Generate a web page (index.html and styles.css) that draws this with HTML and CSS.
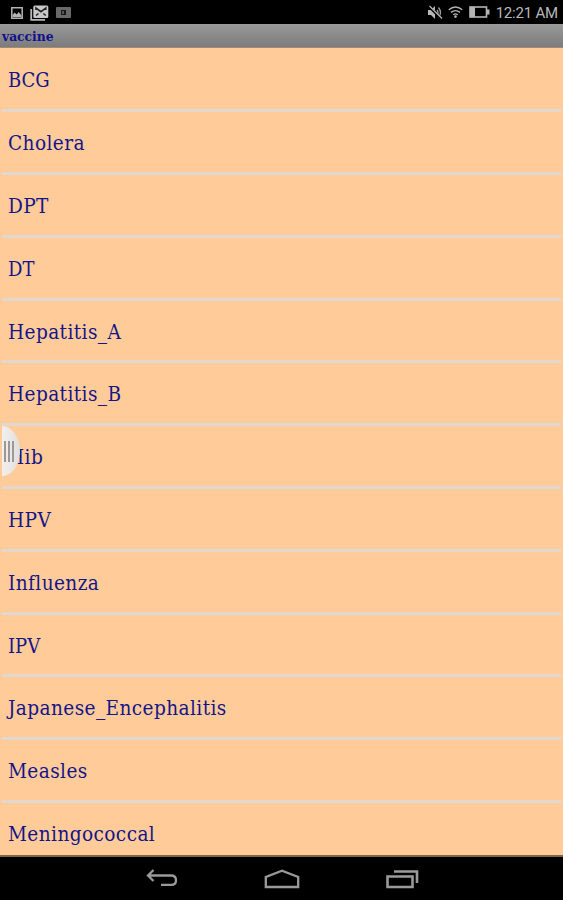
FILE: index.html
```html
<!DOCTYPE html>
<html lang="en">
<head>
  <meta charset="UTF-8">
  <title>vaccine</title>
  <link rel="stylesheet" href="styles.css">
</head>
<body>
  <div class="status-bar">
    <div class="notifications">
      <svg width="12" height="12" viewBox="0 0 12 12"><path d="M.8.8h10.400v10.400H.8z" fill="none" stroke="#b4b4b4" stroke-width="1.500"/><path d="M1.500 10V8l2.200-2.500 1.900 2L7.700 5l2.800 3.500V10z" fill="#b4b4b4"/></svg>
      <svg width="19" height="16" viewBox="0 0 19 16"><path d="M1.200 4v10.800H15" fill="none" stroke="#b8b8b8" stroke-width="1.800"/><rect x="3.300" y=".5" width="15" height="12.400" rx="1.500" fill="#c8c8c8"/><path d="M6 5V3l4.900 3.700L15.800 3v2M6 10.500l2.500-2M15.800 10.500l-2.500-2" fill="none" stroke="#222" stroke-width="1.600"/></svg>
      <svg width="15" height="11" viewBox="0 0 15 11"><rect width="15" height="11" rx="1" fill="#686868"/><rect x="5" y="3" width="5" height="5" fill="#181818"/><path d="M6 4h2v3H6z" fill="#555"/></svg>
    </div>
    <div class="system">
      <svg width="16" height="15" viewBox="0 0 16 15"><path d="M1 5h3l4-4v13l-4-4H1z" fill="#b8b8b8"/><path d="M10 5q2 2.500 0 5M11.500 2.500q4 5 0 10" fill="none" stroke="#a0a0a0" stroke-width="1.300"/><path d="M1.500 1l13 13" stroke="#000" stroke-width="2.500"/><path d="M2.500 1l12.500 12.500" stroke="#b8b8b8" stroke-width="1.200"/></svg>
      <svg class="wifi" width="15" height="12" viewBox="0 0 15 12"><path d="M.8 3.800q6.700-5.600 13.400 0M3 6.400q4.500-3.600 9 0M5.200 8.800q2.300-1.800 4.600 0" fill="none" stroke="#b4b4b4" stroke-width="1.400"/><circle cx="7.500" cy="10.600" r="1.300" fill="#b4b4b4"/></svg>
      <svg class="battery" width="21" height="12" viewBox="0 0 21 12"><rect x="1" y="1" width="16.500" height="10" fill="none" stroke="#b4b4b4" stroke-width="1.600"/><path d="M1 1h5v10H1zM18 3.500h2.500v5H18z" fill="#b4b4b4"/></svg>
      <span class="clock">12:21 AM</span>
    </div>
  </div>

  <div class="title-bar">vaccine</div>

  <div class="content">
    <ul class="list">
      <li class="short">BCG</li>
      <li>Cholera</li>
      <li>DPT</li>
      <li class="short">DT</li>
      <li>Hepatitis_A</li>
      <li>Hepatitis_B</li>
      <li>Hib</li>
      <li>HPV</li>
      <li>Influenza</li>
      <li class="short">IPV</li>
      <li>Japanese_Encephalitis</li>
      <li>Measles</li>
      <li>Meningococcal</li>
    </ul>
    <div class="handle"><i></i><i></i><i></i></div>
  </div>

  <div class="nav-bar">
    <svg width="32" height="20" viewBox="0 0 32 20"><path d="M7.500 1L2 6.500 7.500 12M2.500 6.500H25q5 0 5 4.700t-5 4.700H15" fill="none" stroke="#9a9a9a" stroke-width="2.300"/></svg>
    <svg width="36" height="20" viewBox="0 0 36 20"><path d="M1.800 18V8L18 1.700 34.200 8v10z" fill="none" stroke="#9a9a9a" stroke-width="2.300"/></svg>
    <svg width="33" height="20" viewBox="0 0 33 20"><path d="M1.500 7.500h25V18h-25zM8 2.500h23v11.500" fill="none" stroke="#9a9a9a" stroke-width="2.600"/></svg>
  </div>
</body>
</html>
```
FILE: styles.css
```css
* { box-sizing: border-box; }
body { margin: 0; height: 900px; display: flex; flex-direction: column; overflow: hidden; background: #000; }
svg { display: block; flex: none; }

.status-bar { height: 24px; flex: none; display: flex; justify-content: space-between; padding: 0 5px 0 11px; background: #000; }
.notifications, .system { display: flex; align-items: center; }
.notifications { gap: 7px; padding-top: 1px; }
.wifi { margin-left: 5px; }
.battery { margin-left: 6px; }
.clock { margin-left: 6px; padding-top: 2px; color: #b8b8b8; font: 15px/24px Roboto, sans-serif; letter-spacing: -0.2px; }

.title-bar { height: 24px; flex: none; padding-left: 2px; background: linear-gradient(#999, #7c7c7c); border-bottom: 1px solid #a08a78; color: #11118a; font: bold 12.3px/25px "DejaVu Serif", serif; }

.content { position: relative; height: 809px; flex: none; overflow: hidden; background: #ffcc99; border-bottom: 2px solid #806448; }
.list { list-style: none; margin: 0; padding: 1.4px 2px 0; }
.list li { height: 62.8px; padding: 1px 6px 0; border-bottom: 3px solid #e2d8d0; color: #15158a; font: 20.6px/60px "DejaVu Serif Condensed", "DejaVu Serif", serif; letter-spacing: 0.4px; white-space: nowrap; }
.list .short { font-size: 20px; letter-spacing: 0; }

/* drawer handle over the list */
.handle { position: absolute; left: 2px; top: 378px; width: 18px; height: 50px; padding: 15px 0 0 2px; display: flex; gap: 2px; background: linear-gradient(90deg, #f4f0ee, #e0dedc); border-radius: 0 18px 18px 0 / 0 25px 25px 0; }
.handle i { width: 2px; height: 21px; background: #999; }

.nav-bar { flex: 1; display: flex; justify-content: center; align-items: center; gap: 86px; padding: 1px 0 0 2px; background: #000; }
```
